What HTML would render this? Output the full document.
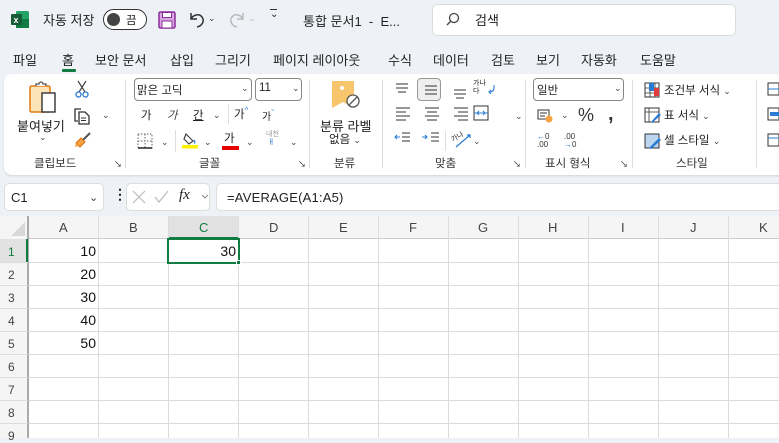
<!DOCTYPE html>
<html><head><meta charset="utf-8">
<style>
*{margin:0;padding:0;box-sizing:border-box}
body{width:779px;height:438px;overflow:hidden;background:#eef1f6;font-family:"Liberation Sans","Noto Sans CJK KR",sans-serif;color:#222;position:relative;font-size:12px}
.a{position:absolute;white-space:nowrap}
.t{font-size:13px}
.s{font-size:11.5px}
.gl{font-size:11.5px;color:#333}
.sep{position:absolute;width:1px;background:#ddd}
.chev{font-size:9px;color:#444}
</style></head><body>
<!-- title bar -->
<svg class="a" style="left:11px;top:11px" width="18" height="17" viewBox="0 0 18 17"><rect x="5" y="0" width="13" height="17" rx="1.5" fill="#21a366"/><rect x="5" y="8" width="13" height="9" fill="#107c41"/><rect x="0" y="3" width="11" height="11" rx="1" fill="#185c37"/><text x="2.5" y="12" font-size="9" font-weight="bold" fill="#fff" font-family="Liberation Sans">x</text></svg>
<div class="a t" style="left:43px;top:10px">자동 저장</div>
<div class="a" style="left:103px;top:9px;width:44px;height:21px;border:1.5px solid #333;border-radius:11px;background:#fff"><div class="a" style="left:3px;top:2.5px;width:13px;height:13px;border-radius:50%;background:#444"></div><div class="a s" style="left:22px;top:2px">끔</div></div>
<svg class="a" style="left:158px;top:11px" width="18" height="18" viewBox="0 0 18 18"><rect x="1" y="1" width="16" height="16" rx="1.5" fill="#d8a6e0" stroke="#8a2d9b" stroke-width="1.5"/><rect x="4.5" y="1.5" width="9" height="5" fill="#fff" stroke="#8a2d9b" stroke-width="1"/><rect x="4" y="10" width="10" height="7" fill="#fff" stroke="#8a2d9b" stroke-width="1"/></svg>
<svg class="a" style="left:188px;top:11px" width="18" height="18" viewBox="0 0 18 18"><path d="M3 2v6h6M3 8c2-4 8-6 11-2 3 4 0 9-5 10" fill="none" stroke="#333" stroke-width="1.5"/></svg>
<div class="a chev" style="left:208px;top:13px">⌄</div>
<svg class="a" style="left:228px;top:11px" width="18" height="18" viewBox="0 0 18 18"><path d="M15 2v6h-6M15 8c-2-4-8-6-11-2-3 4 0 9 5 10" fill="none" stroke="#bbb" stroke-width="1.5"/></svg>
<div class="a chev" style="left:248px;top:13px;color:#bbb">⌄</div>
<div class="a" style="left:270px;top:9px;font-size:10px">⌄</div>
<div class="a" style="left:270px;top:9px;width:7px;border-top:1px solid #333"></div>
<div class="a t" style="left:303px;top:11px">통합 문서1 &nbsp;- &nbsp;E...</div>
<div class="a" style="left:432px;top:4px;width:304px;height:32px;background:#fff;border:1px solid #d8dce2;border-radius:5px"></div>
<svg class="a" style="left:446px;top:12px" width="14" height="14" viewBox="0 0 14 14"><circle cx="8" cy="6" r="4.5" fill="none" stroke="#444" stroke-width="1.3"/><path d="M4.6 9.4L1 13" stroke="#444" stroke-width="1.4"/></svg>
<div class="a t" style="left:475px;top:10px">검색</div>
<!-- tabs -->
<div class="a t" style="left:13px;top:50px;word-spacing:0">파일</div>
<div class="a t" style="left:62px;top:50px">홈</div>
<div class="a" style="left:62px;top:69px;width:14px;height:3px;background:#107c41;border-radius:1px"></div>
<div class="a t" style="left:95px;top:50px">보안 문서</div>
<div class="a t" style="left:170px;top:50px">삽입</div>
<div class="a t" style="left:215px;top:50px">그리기</div>
<div class="a t" style="left:273px;top:50px">페이지 레이아웃</div>
<div class="a t" style="left:388px;top:50px">수식</div>
<div class="a t" style="left:433px;top:50px">데이터</div>
<div class="a t" style="left:491px;top:50px">검토</div>
<div class="a t" style="left:536px;top:50px">보기</div>
<div class="a t" style="left:581px;top:50px">자동화</div>
<div class="a t" style="left:640px;top:50px">도움말</div>
<!-- ribbon -->
<div class="a" style="left:4px;top:74px;width:790px;height:101px;background:#fff;border-radius:8px;box-shadow:0 1px 2px rgba(0,0,0,.12)"></div>
<!-- clipboard -->
<svg class="a" style="left:28px;top:80px" width="30" height="34" viewBox="0 0 30 34"><rect x="2" y="6" width="20" height="26" rx="1.5" fill="#fde3b8" stroke="#e07a10" stroke-width="1.5"/><path d="M8 6v-2h3a2 2 0 0 1 4 0h3v2" fill="#fff" stroke="#555" stroke-width="1.3"/><rect x="14" y="13" width="13" height="19" fill="#fff" stroke="#333" stroke-width="1.4"/></svg>
<div class="a t" style="left:17px;top:116px">붙여넣기</div>
<div class="a chev" style="left:39px;top:132px">⌄</div>
<svg class="a" style="left:75px;top:80px" width="14" height="18" viewBox="0 0 14 18"><path d="M3 1l7 11M11 1L4 12" stroke="#444" stroke-width="1.2"/><circle cx="3.5" cy="14.5" r="2.5" fill="none" stroke="#2a7bd4" stroke-width="1.3"/><circle cx="10.5" cy="14.5" r="2.5" fill="none" stroke="#2a7bd4" stroke-width="1.3"/></svg>
<svg class="a" style="left:73px;top:107px" width="18" height="18" viewBox="0 0 18 18"><path d="M5 14H2V2h6" fill="none" stroke="#333" stroke-width="1.3"/><path d="M6 5h6l4 4v8H6z" fill="#fff" stroke="#333" stroke-width="1.3"/><path d="M8 11h5M8 13.5h5" stroke="#333"/></svg>
<div class="a chev" style="left:102px;top:110px">⌄</div>
<svg class="a" style="left:74px;top:132px" width="18" height="17" viewBox="0 0 18 17"><path d="M9 8l7-7" stroke="#555" stroke-width="2"/><path d="M2 11l5-5 4 4-5 5z" fill="#f5a142" stroke="#d9700e"/><path d="M2 11l-1 4 4-1" fill="#f5a142"/></svg>
<div class="a gl" style="left:34px;top:155px">클립보드</div>
<div class="a" style="left:114px;top:159px;font-size:8px">↘</div>
<div class="sep" style="left:125px;top:80px;height:88px"></div>
<!-- font -->
<div class="a" style="left:134px;top:78px;width:118px;height:23px;border:1px solid #888;border-radius:4px"><div class="a s" style="left:2px;top:3px">맑은 고딕</div><div class="a chev" style="left:106px;top:4px">⌄</div></div>
<div class="a" style="left:255px;top:78px;width:47px;height:23px;border:1px solid #888;border-radius:4px"><div class="a s" style="left:3px;top:3px">11</div><div class="a chev" style="left:36px;top:4px">⌄</div></div>
<div class="a s" style="left:141px;top:107px">가</div>
<div class="a s" style="left:167px;top:107px;font-style:italic;color:#444">가</div>
<div class="a s" style="left:193px;top:107px;text-decoration:underline">간</div>
<div class="a chev" style="left:213px;top:110px">⌄</div>
<div class="sep" style="left:228px;top:104px;height:20px"></div>
<div class="a s" style="left:234px;top:106px">가<sup style="font-size:8px;color:#2a7bd4">^</sup></div>
<div class="a s" style="left:262px;top:108px;font-size:10px">가<sup style="font-size:8px;color:#2a7bd4">ˇ</sup></div>
<svg class="a" style="left:137px;top:133px" width="16" height="16" viewBox="0 0 16 16"><rect x="1" y="1" width="14" height="14" fill="none" stroke="#666" stroke-dasharray="1.5 1.5"/><path d="M8 1v14M1 8h14" stroke="#666" stroke-dasharray="1.5 1.5"/><path d="M1 15h14" stroke="#222" stroke-width="1.5"/></svg>
<div class="a chev" style="left:161px;top:137px">⌄</div>
<div class="sep" style="left:175px;top:130px;height:22px"></div>
<svg class="a" style="left:182px;top:131px" width="17" height="18" viewBox="0 0 17 18"><path d="M4 3l7 7-4 3-5-5z" fill="none" stroke="#444" stroke-width="1.2"/><path d="M12 9c1 1 1 3 0 3" stroke="#2a7bd4" stroke-width="1.3" fill="none"/><rect x="0" y="14" width="16" height="3.5" fill="#ffef00"/></svg>
<div class="a chev" style="left:204px;top:137px">⌄</div>
<div class="a s" style="left:224px;top:130px">가</div>
<div class="a" style="left:222px;top:146px;width:17px;height:4px;background:#e60000"></div>
<div class="a chev" style="left:246px;top:137px">⌄</div>
<div class="a" style="left:266px;top:131px;font-size:7px;color:#999;line-height:8px">내천<br>&nbsp;<span style="color:#2a7bd4">ㅐ</span></div>
<div class="a chev" style="left:290px;top:137px">⌄</div>
<div class="a gl" style="left:199px;top:155px">글꼴</div>
<div class="a" style="left:298px;top:159px;font-size:8px">↘</div>
<div class="sep" style="left:309px;top:80px;height:88px"></div>
<!-- 분류 -->
<svg class="a" style="left:331px;top:80px" width="32" height="32" viewBox="0 0 32 32"><path d="M1 1h22v27l-11-6-11 6z" fill="#f7c56c"/><circle cx="11" cy="8" r="2" fill="#fff"/><circle cx="22" cy="21" r="6" fill="#fff" stroke="#555" stroke-width="1.3"/><path d="M18 25l8-8" stroke="#555" stroke-width="1.3"/></svg>
<div class="a t" style="left:320px;top:116px">분류 라벨</div>
<div class="a s" style="left:329px;top:131px">없음 <span class="chev">⌄</span></div>
<div class="a gl" style="left:334px;top:155px">분류</div>
<div class="sep" style="left:382px;top:80px;height:88px"></div>
<!-- align -->
<div class="a" style="left:417px;top:78px;width:24px;height:23px;background:#eee;border:1px solid #999;border-radius:4px"></div>
<svg class="a" style="left:394px;top:82px" width="130" height="72" viewBox="0 0 130 72">
<g stroke="#333" stroke-width="1.1"><path d="M2 2h12M2 6h12M4 10h8"/>
<path d="M31 4h12M31 8h12M31 12h12"/>
<path d="M60 8h12M60 12h12M62 16h8"/>
<path d="M2 26h14M2 30h10M2 34h14M2 38h10"/>
<path d="M31 26h14M33 30h10M31 34h14M33 38h10"/>
<path d="M60 26h14M64 30h10M60 34h14M64 38h10"/>
<path d="M8 51h8M8 55h8M8 59h8"/><path d="M37 51h8M37 55h8M37 59h8"/></g>
<g stroke="#2a7bd4" stroke-width="1.1" fill="none"><path d="M6 55H1m2-2l-2 2 2 2"/><path d="M28 55h5m-2-2l2 2-2 2"/><path d="M100 3v3c0 3-2 4-5 4m2-2l-2 2 2 2"/></g>
<rect x="80" y="24" width="14" height="14" fill="none" stroke="#333"/><path d="M80 31h14" stroke="#2a7bd4"/><path d="M83 31l2-2M83 31l2 2M91 31l-2-2M91 31l-2 2" stroke="#2a7bd4"/>
<path d="M62 65l14-12m-3 0h3v3" stroke="#2a7bd4" stroke-width="1.2" fill="none"/>
</svg>
<div class="a" style="left:473px;top:80px;font-size:7px;line-height:8px">가나<br>다</div>
<div class="a chev" style="left:515px;top:111px">⌄</div>
<div class="sep" style="left:445px;top:131px;height:20px"></div>
<div class="a" style="left:451px;top:132px;font-size:7px;transform:rotate(-30deg)">가나</div>
<div class="a chev" style="left:473px;top:136px">⌄</div>
<div class="a gl" style="left:435px;top:155px">맞춤</div>
<div class="a" style="left:513px;top:159px;font-size:8px">↘</div>
<div class="sep" style="left:525px;top:80px;height:88px"></div>
<!-- number -->
<div class="a" style="left:533px;top:78px;width:91px;height:23px;border:1px solid #888;border-radius:4px"><div class="a s" style="left:3px;top:3px">일반</div><div class="a chev" style="left:80px;top:4px">⌄</div></div>
<svg class="a" style="left:537px;top:109px" width="16" height="14" viewBox="0 0 16 14"><rect x="1" y="1" width="11" height="9" fill="none" stroke="#333"/><path d="M3 4h7M3 7h5" stroke="#333"/><ellipse cx="12" cy="10" rx="3.5" ry="3.5" fill="#f5a142"/></svg>
<div class="a chev" style="left:561px;top:110px">⌄</div>
<div class="a" style="left:578px;top:105px;font-size:18px;color:#333">%</div>
<div class="a" style="left:608px;top:103px;font-size:20px;font-weight:bold;color:#333">,</div>
<div class="a" style="left:537px;top:133px;font-size:8px;line-height:8px;color:#333"><span style="color:#2a7bd4">←</span>0<br>.00</div>
<div class="a" style="left:564px;top:133px;font-size:8px;line-height:8px;color:#333">.00<br><span style="color:#2a7bd4">→</span>0</div>
<div class="a gl" style="left:545px;top:155px">표시 형식</div>
<div class="a" style="left:620px;top:159px;font-size:8px">↘</div>
<div class="sep" style="left:632px;top:80px;height:88px"></div>
<!-- styles -->
<svg class="a" style="left:644px;top:82px" width="16" height="16" viewBox="0 0 16 16"><rect x="1" y="1" width="14" height="14" fill="none" stroke="#333"/><path d="M1 6h14M1 11h14M6 1v14M11 1v14" stroke="#333" stroke-width=".8"/><rect x="5" y="1" width="5" height="8" fill="#2a7bd4"/><rect x="10" y="6" width="5" height="8" fill="#e23b3b"/></svg>
<div class="a s" style="left:664px;top:82px">조건부 서식 <span class="chev">⌄</span></div>
<svg class="a" style="left:644px;top:107px" width="17" height="17" viewBox="0 0 17 17"><rect x="1" y="1" width="14" height="14" fill="none" stroke="#333"/><path d="M1 5h14M5 1v14" stroke="#333" stroke-width=".8"/><path d="M7 15l8-9 2 2-9 8z" fill="#2a7bd4"/></svg>
<div class="a s" style="left:664px;top:107px">표 서식 <span class="chev">⌄</span></div>
<svg class="a" style="left:644px;top:133px" width="17" height="17" viewBox="0 0 17 17"><rect x="1" y="1" width="14" height="14" fill="#bcd6f0" stroke="#333"/><path d="M5 15l10-10 2 2-10 9z" fill="#2a7bd4"/></svg>
<div class="a s" style="left:664px;top:132px">셀 스타일 <span class="chev">⌄</span></div>
<div class="a gl" style="left:676px;top:155px">스타일</div>
<div class="sep" style="left:756px;top:80px;height:88px"></div>
<svg class="a" style="left:767px;top:82px" width="12" height="70" viewBox="0 0 12 70"><rect x="1" y="1" width="11" height="12" fill="none" stroke="#333"/><path d="M1 7h11" stroke="#2a7bd4"/><rect x="1" y="26" width="11" height="12" fill="none" stroke="#333"/><rect x="3" y="30" width="9" height="4" fill="#2a7bd4"/><rect x="1" y="52" width="11" height="12" fill="none" stroke="#333"/><path d="M1 56h11" stroke="#2a7bd4"/></svg>
<!-- formula bar -->
<div class="a" style="left:4px;top:183px;width:100px;height:28px;background:#fff;border:1px solid #ddd;border-radius:5px"><div class="a t" style="left:6px;top:6px">C1</div><div class="a chev" style="left:84px;top:7px;font-size:11px">⌄</div></div>
<div class="a" style="left:113px;top:186px;font-size:14px;font-weight:bold">⋮</div>
<div class="a" style="left:126px;top:183px;width:84px;height:28px;background:#fff;border:1px solid #ddd;border-radius:5px"></div>
<svg class="a" style="left:131px;top:189px" width="80" height="16" viewBox="0 0 80 16"><path d="M2 2l12 12M14 2L2 14" stroke="#bbb" stroke-width="1.2"/><path d="M24 8l4 5 9-11" stroke="#bbb" stroke-width="1.2" fill="none"/><path d="M71 6l3 3 3-3" stroke="#888" fill="none"/></svg>
<div class="a" style="left:179px;top:187px;font-family:'Liberation Serif',serif;font-style:italic;font-size:15px">fx</div>
<div class="a" style="left:216px;top:183px;width:570px;height:28px;background:#fff;border:1px solid #ddd;border-radius:5px"><div class="a t" style="left:10px;top:6px;letter-spacing:.2px">=AVERAGE(A1:A5)</div></div>
<!-- grid -->
<div class="a" style="left:0;top:216px;width:779px;height:222px;background:#fff"></div>
<div class="a" style="left:0;top:216px;width:779px;height:23px;background:#f5f5f5;border-bottom:1px solid #ccc"></div>
<div class="a" style="left:0;top:216px;width:28px;height:222px;background:#f5f5f5;border-right:1px solid #aaa"></div>
<svg class="a" style="left:0;top:216px" width="28" height="23"><path d="M25 6v14H11z" fill="#d8d8d8"/></svg>
<div class="a" style="left:168px;top:216px;width:70px;height:23px;background:#e1e1e1;border-bottom:2px solid #107c41"></div>
<div class="a" style="left:0;top:239px;width:28px;height:23px;background:#e1e1e1;border-right:2px solid #107c41"></div>
<div id="g"></div>
<svg class="a" style="left:0;top:216px" width="779" height="222">
<g stroke="#dcdcdc" stroke-width="1">
<path d="M98.5 0V222M168.5 0V222M238.5 0V222M308.5 0V222M378.5 0V222M448.5 0V222M518.5 0V222M588.5 0V222M658.5 0V222M728.5 0V222"/>
<path d="M0 46.5H779M0 69.5H779M0 92.5H779M0 115.5H779M0 138.5H779M0 161.5H779M0 184.5H779M0 207.5H779"/>
</g>
<path d="M28.5 0V222" stroke="#aaa"/>
</svg>
<div class="a" style="left:167px;top:238px;width:73px;height:26px;border:2px solid #107c41"></div>
<div class="a" style="left:236px;top:260px;width:5px;height:5px;background:#107c41;border:1px solid #fff"></div>
<div style="font-size:13px;color:#444">
<div class="a" style="left:59px;top:220px">A</div><div class="a" style="left:129px;top:220px">B</div><div class="a" style="left:199px;top:220px;color:#107c41">C</div><div class="a" style="left:269px;top:220px">D</div><div class="a" style="left:339px;top:220px">E</div><div class="a" style="left:409px;top:220px">F</div><div class="a" style="left:478px;top:220px">G</div><div class="a" style="left:548px;top:220px">H</div><div class="a" style="left:621px;top:220px">I</div><div class="a" style="left:690px;top:220px">J</div><div class="a" style="left:759px;top:220px">K</div>
</div>
<div style="font-size:12px;color:#444">
<div class="a" style="left:8px;top:245px;color:#107c41">1</div><div class="a" style="left:8px;top:268px">2</div><div class="a" style="left:8px;top:291px">3</div><div class="a" style="left:8px;top:314px">4</div><div class="a" style="left:8px;top:337px">5</div><div class="a" style="left:8px;top:360px">6</div><div class="a" style="left:8px;top:383px">7</div><div class="a" style="left:8px;top:406px">8</div><div class="a" style="left:8px;top:429px">9</div>
</div>
<div style="font-size:14px;color:#111">
<div class="a" style="right:683px;top:243px">10</div><div class="a" style="right:683px;top:266px">20</div><div class="a" style="right:683px;top:289px">30</div><div class="a" style="right:683px;top:312px">40</div><div class="a" style="right:683px;top:335px">50</div>
<div class="a" style="right:543px;top:243px">30</div>
</div>
</body></html>
